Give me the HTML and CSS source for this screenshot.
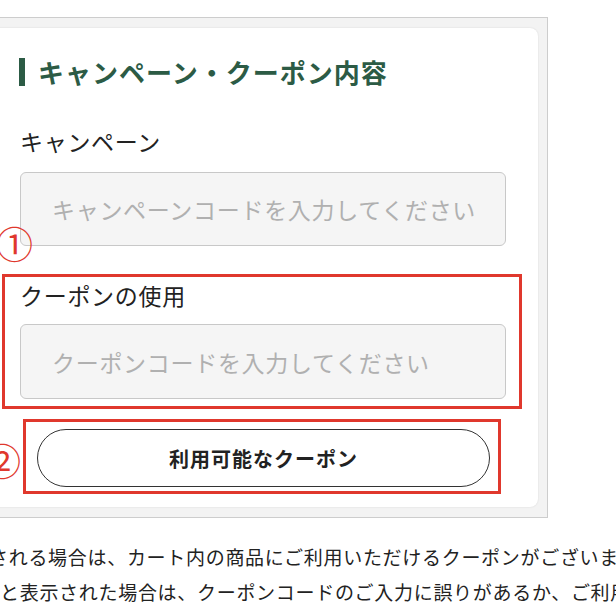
FILE: index.html
```html
<!DOCTYPE html>
<html lang="ja">
<head>
<meta charset="utf-8">
<link rel="stylesheet" href="styles.css">
</head>
<body>
<div class="page">
  <div class="frame">
    <div class="card">
      <h2 class="heading"><span class="bar"></span><span>キャンペーン・クーポン内容</span></h2>
      <div class="label first">キャンペーン</div>
      <div class="input">キャンペーンコードを入力してください</div>
      <div class="mark-box coupon">
        <div class="label">クーポンの使用</div>
        <div class="input second">クーポンコードを入力してください</div>
      </div>
      <div class="mark-box btn-box">
        <button class="pill">利用可能なクーポン</button>
      </div>
      <span class="num num1">①</span>
      <span class="num num2">②</span>
    </div>
  </div>
  <p class="note l1">される場合は、カート内の商品にご利用いただけるクーポンがございます。</p>
  <p class="note l2">と表示された場合は、クーポンコードのご入力に誤りがあるか、ご利用いただけません。</p>
</div>
</body>
</html>
```
FILE: styles.css
```css
html, body {
  margin: 0;
  padding: 0;
  overflow: hidden;
  background: #fff;
}
body {
  font-family: "Noto Sans CJK JP", "Noto Sans", sans-serif;
  color: #222;
}
.page {
  width: 616px;
  height: 616px;
  overflow: hidden;
}
.frame {
  margin: 17px 0 0 -20px;
  width: 568px;
  box-sizing: border-box;
  border: 1px solid #cdcdcd;
  background: #f3f3f3;
  padding: 10px 9px 10px 10px;
}
.card {
  position: relative;
  background: #fff;
  border-radius: 8px;
  box-shadow: 0 0 2px rgba(0,0,0,0.12);
  padding: 30px 32px 13px 29px;
}
.heading {
  display: flex;
  align-items: center;
  height: 28px;
  margin: 0;
  font-size: 26px;
  font-weight: 700;
  letter-spacing: 1px;
  color: #2c5b45;
  line-height: 28px;
}
.bar {
  width: 6px;
  height: 28px;
  background: #2c5b45;
  margin-right: 13px;
  margin-left: -1px;
}
.label {
  font-size: 23px;
  line-height: 30px;
  letter-spacing: 0.7px;
  color: #222;
}
.label.first {
  margin-top: 40px;
}
.input {
  margin-top: 16px;
  height: 74px;
  box-sizing: border-box;
  border: 1px solid #c8c8c8;
  border-radius: 6px;
  background: #f5f5f5;
  padding-left: 31px;
  display: flex;
  align-items: center;
  font-size: 23px;
  letter-spacing: 0.7px;
  color: #b0b0b0;
}
.input.second {
  margin-top: 14px;
  height: 75px;
}
.mark-box {
  border: 3px solid #e0382d;
}
.coupon {
  margin: 28px -16px 0 -18px;
  padding: 3px 13px 7px 15px;
}
.btn-box {
  margin: 10px 5px 0 3px;
  padding: 7px 8px 4px 11px;
}
.pill {
  display: block;
  width: 100%;
  height: 58px;
  border: 1.5px solid #333;
  border-radius: 29px;
  background: #fff;
  font-family: "Noto Sans CJK JP", "Noto Sans", sans-serif;
  font-size: 20px;
  font-weight: 700;
  letter-spacing: 1px;
  color: #222;
}
.num {
  position: absolute;
  font-size: 37px;
  line-height: 37px;
  font-weight: 400;
  color: #e0382d;
}
.num1 {
  left: 5px;
  top: 197px;
}
.num2 {
  left: -7px;
  top: 414px;
}
.note {
  margin: 0;
  white-space: nowrap;
  font-size: 19px;
  line-height: 35px;
  letter-spacing: 0.7px;
  color: #222;
}
.l1 {
  margin-top: 21px;
  margin-left: -11px;
}
.l2 {
  margin-left: 0;
}
```
